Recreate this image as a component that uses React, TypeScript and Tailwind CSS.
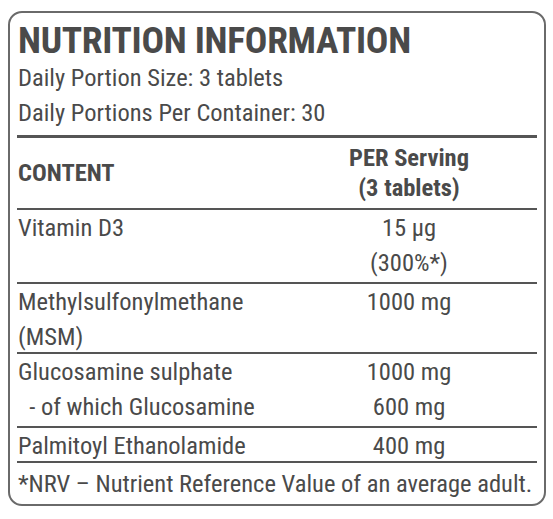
import React from "react";

const rows = [
	{ name: ["Vitamin D3"], value: ["15 µg", "(300%*)"], h: "h-[74px]" },
	{ name: ["Methylsulfonylmethane", "(MSM)"], value: ["1000 mg"], h: "h-[70px]" },
	{ name: ["Glucosamine sulphate", "\u00a0\u00a0- of which Glucosamine"], value: ["1000 mg", "600 mg"], h: "h-[74px]" },
	{ name: ["Palmitoyl Ethanolamide"], value: ["400 mg"], h: "h-[35px]" },
];

const App = () => {
	return (
		<div
			className="w-[553px] h-[519px] bg-white pt-[11px] pl-[8px] text-[#4a4a4a]"
			style={{ fontFamily: "Roboto, 'Liberation Sans', sans-serif", fontStretch: "condensed" }}
		>
			<div className="w-[538px] h-[495px] border-2 border-[#6a6a6a] rounded-[14px] px-[7px] pt-[7px]">
				<h1 className="text-[37.5px] leading-[40px] font-bold tracking-[-0.3px] pl-[1px]">
					NUTRITION INFORMATION
				</h1>
				<p className="text-[24.5px] leading-[35px] pl-[1px]">Daily Portion Size: 3 tablets</p>
				<p className="text-[24.5px] leading-[35px] pl-[1px]">Daily Portions Per Container: 30</p>

				<div className="mt-[5px] border-t-[3px] border-[#555]">
					<div className="flex h-[70px] items-center font-bold text-[24.5px]">
						<div className="w-[300px] pl-[1px]">CONTENT</div>
						<div className="flex-1 text-center leading-[30px] pr-[36px]">
							<div>PER Serving</div>
							<div>(3 tablets)</div>
						</div>
					</div>
					{rows.map((row, i) => (
						<div
							key={i}
							className={`flex border-t-2 border-[#555] text-[24.5px] leading-[35px] box-border ${row.h}`}
						>
							<div className="w-[300px] pl-[1px] whitespace-pre">
								{row.name.map((n) => (
									<div key={n}>{n}</div>
								))}
							</div>
							<div className="flex-1 text-center pr-[36px]">
								{row.value.map((v) => (
									<div key={v}>{v}</div>
								))}
							</div>
						</div>
					))}
					<div className="border-t-2 border-[#555] pt-[3px] text-[24.5px] leading-[35px] pl-[1px] whitespace-nowrap">
						*NRV – Nutrient Reference Value of an average adult.
					</div>
				</div>
			</div>
		</div>
	);
};

export default App;
